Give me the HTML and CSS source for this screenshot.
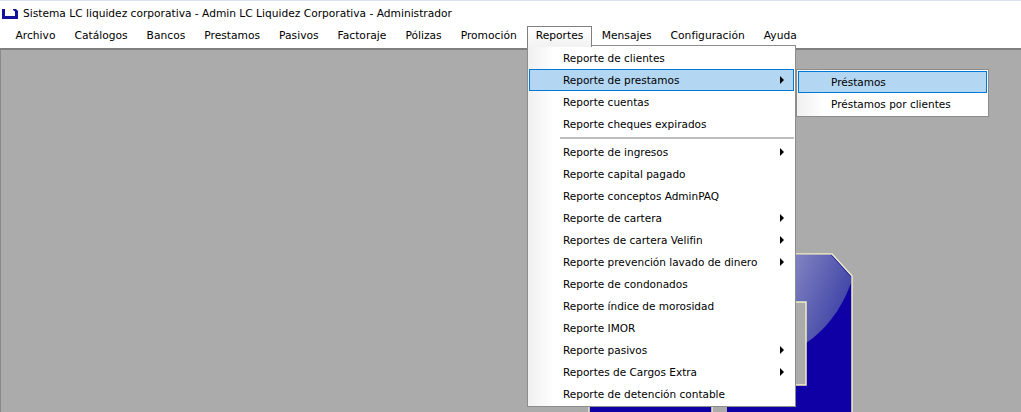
FILE: index.html
```html
<!DOCTYPE html>
<html lang="es">
<head>
<meta charset="utf-8">
<title>Sistema LC liquidez corporativa</title>
<link rel="stylesheet" href="styles.css">
</head>
<body>
<div class="window">
  <header class="titlebar">
    <svg class="appicon" viewBox="0 0 16 10" width="16" height="10"><path d="M0 0H3V7H13V2.5L11 1V0H14L16 2V10H0Z" fill="#12129a"/></svg>
    <span>Sistema LC liquidez corporativa - Admin LC Liquidez Corporativa - Administrador</span>
  </header>
  <nav class="menubar">
    <span class="top">Archivo</span>
    <span class="top">Catálogos</span>
    <span class="top">Bancos</span>
    <span class="top">Prestamos</span>
    <span class="top">Pasivos</span>
    <span class="top">Factoraje</span>
    <span class="top">Pólizas</span>
    <span class="top">Promoción</span>
    <span class="top open">Reportes</span>
    <span class="top">Mensajes</span>
    <span class="top">Configuración</span>
    <span class="top">Ayuda</span>
  </nav>
  <main class="desktop">
    <svg class="logo" viewBox="0 0 265 159" width="265" height="159">
      <defs>
        <linearGradient id="shine" x1="0" x2="1" y1="0" y2="0.4"><stop offset="0" stop-color="#b4b6d6"/><stop offset="1" stop-color="#3f43a6"/></linearGradient>
      </defs>
      <path d="M139 159V1H244L264 23V159Z" fill="#0e00a4"/>
      <path d="M139 1H244L264 23V159" fill="none" stroke="#efefc4" stroke-width="1.5"/>
      <path d="M150 2H243L263 24V30C253 58 236 78 218 90L150 110Z" fill="url(#shine)"/>
      <path d="M190 49H218V132H190" fill="#ababab" stroke="#efefc4" stroke-width="1.5"/>
      <path d="M1 159V150H124V159" fill="#0e00a4" stroke="#efefc4" stroke-width="1.5"/>
    </svg>
  </main>
  <div class="menu main-menu">
    <div class="item">Reporte de clientes</div>
    <div class="item hot sub">Reporte de prestamos</div>
    <div class="item">Reporte cuentas</div>
    <div class="item">Reporte cheques expirados</div>
    <div class="sep"></div>
    <div class="item sub">Reporte de ingresos</div>
    <div class="item">Reporte capital pagado</div>
    <div class="item">Reporte conceptos AdminPAQ</div>
    <div class="item sub">Reporte de cartera</div>
    <div class="item sub">Reportes de cartera Velifin</div>
    <div class="item sub">Reporte prevención lavado de dinero</div>
    <div class="item">Reporte de condonados</div>
    <div class="item">Reporte índice de morosidad</div>
    <div class="item">Reporte IMOR</div>
    <div class="item sub">Reporte pasivos</div>
    <div class="item sub">Reportes de Cargos Extra</div>
    <div class="item">Reporte de detención contable</div>
  </div>
  <div class="menu sub-menu">
    <div class="item hot">Préstamos</div>
    <div class="item">Préstamos por clientes</div>
  </div>
</div>
</body>
</html>
```
FILE: styles.css
```css
* { box-sizing: border-box; }
html, body { margin: 0; height: 100%; overflow: hidden; }
body { font: 10.5px/14px "DejaVu Sans", sans-serif; color: #000; background: #fff; }
.window { position: relative; width: 1021px; height: 412px; display: flex; flex-direction: column; }
.titlebar { height: 23px; flex: none; display: flex; align-items: center; gap: 5px; padding: 3px 0 0 2px; border-top: 1px solid #d9e4f2; font-size: 10.65px; }
.appicon { margin-top: 1px; }
.menubar { height: 25px; flex: none; display: flex; padding: 3px 0 0 6px; font-size: 10.7px; }
.top { padding: 3px 9.5px; height: 21px; white-space: nowrap; }
.top.open { border: 1px solid #808080; border-bottom: 0; padding: 2px 8px; height: 21px; background: linear-gradient(#fff, #f2f2f2); position: relative; z-index: 3; margin-left: 0.5px; }
.desktop { flex: 1; position: relative; overflow: hidden; background: #ababab; border-top: 2px solid #7f7f7f; border-left: 1px solid #8a8a8a; }
.logo { position: absolute; left: 587px; top: 203px; }
.menu { position: absolute; background: #fff; border: 1px solid #8c8c8c; padding: 1px; background-image: linear-gradient(90deg, #f0f0f0, #fdfdfd); background-size: 24px 100%; background-repeat: no-repeat; }
.main-menu { left: 527px; top: 45px; width: 269px; height: 362px; z-index: 2; }
.sub-menu { left: 796px; top: 69px; width: 193px; height: 48px; z-index: 2; }
.item { height: 22px; padding: 4px 0 0 34px; white-space: nowrap; position: relative; }
.item.hot { background: #b3d6f3; border: 1px solid #0078d7; padding: 3px 0 0 33px; }
.sub-menu .item { padding-left: 33px; }
.sub-menu .item.hot { padding-left: 32px; }
.item.sub::after { content: ""; position: absolute; right: 10px; top: 7px; border-left: 4px solid #000; border-top: 4px solid transparent; border-bottom: 4px solid transparent; }
.item.hot.sub::after { right: 9px; top: 6px; }
.sep { height: 2px; margin: 2px 0 2px 31px; background: #bdbdbd; }
```
